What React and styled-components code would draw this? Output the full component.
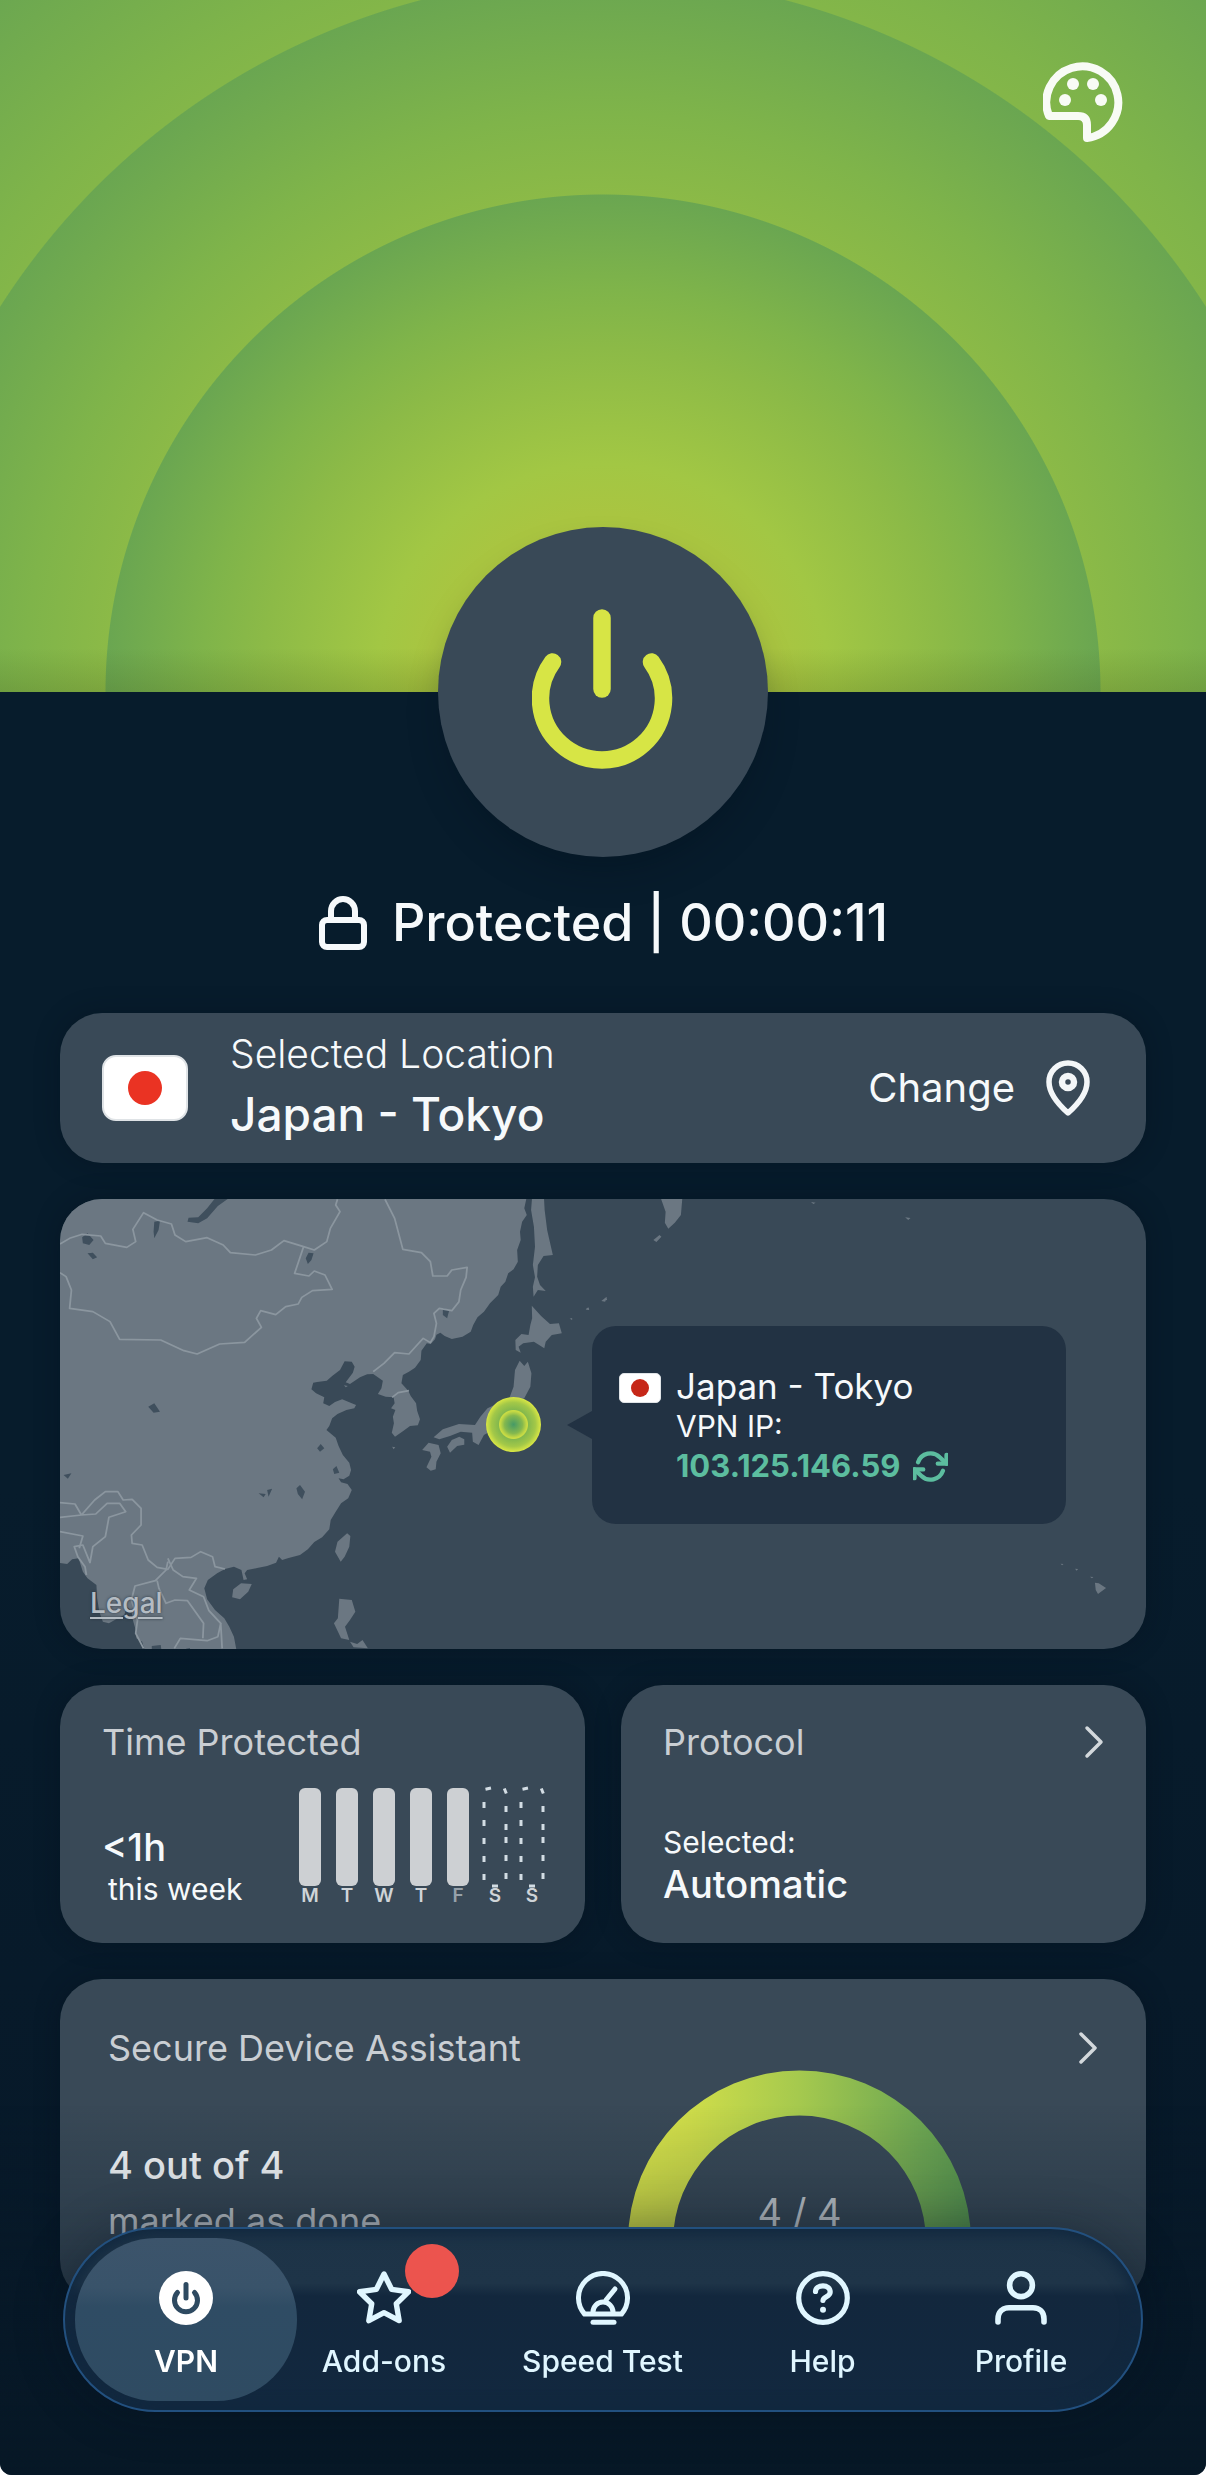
import React from "react";
import styled, { createGlobalStyle } from "styled-components";
import { FiRefreshCw } from "react-icons/fi";

const GlobalStyle = createGlobalStyle`
  *, *::before, *::after { box-sizing: border-box; }
  html { background: #ffffff; }
  body {
    margin: 0;
    font-family: Inter, "Open Sans", "Liberation Sans", sans-serif;
    color: #f6f9fb;
    -webkit-font-smoothing: antialiased;
  }
  button { font: inherit; color: inherit; background: none; border: 0; padding: 0; cursor: pointer; }
  h1, h2, p { margin: 0; font-weight: inherit; font-size: inherit; }
  svg { display: block; flex: none; }
`;

const Page = styled.div`
  min-height: 100vh;
  display: flex;
  flex-direction: column;
  background: linear-gradient(#071c2c 60%, #071828);
  border-radius: 0 0 12px 12px;
  overflow: hidden;
`;

const ringStops = (radius) => `
  #b1c43f 0px,
  #a9c541 ${radius * 0.36}px,
  #a2c744 ${radius * 0.46}px,
  #8cba47 ${radius * 0.69}px,
  #7fb44a ${radius * 0.81}px,
  #6aa651 ${radius}px
`;

const Hero = styled.header`
  height: 692px;
  display: flex;
  justify-content: flex-end;
  align-items: flex-start;
  padding: 62px 83px;
  background:
    linear-gradient(transparent calc(100% - 44px), rgba(60, 80, 20, 0.2)),
    radial-gradient(circle at 50% 100%, ${ringStops(497)}, transparent 498px),
    radial-gradient(circle at 50% 100%, ${ringStops(715)}, transparent 716px),
    radial-gradient(circle at 50% 100%, ${ringStops(933)});
`;

const IconButton = styled.button`
  display: flex;
`;

const PowerButton = styled.button`
  align-self: center;
  width: 330px;
  height: 330px;
  margin-top: -165px;
  display: flex;
  align-items: center;
  justify-content: center;
  border-radius: 50%;
  background: #394957;
  box-shadow: 0 20px 36px -8px rgba(4, 14, 26, 0.35);
`;

const Status = styled.h1`
  display: flex;
  align-items: center;
  justify-content: center;
  gap: 24px;
  margin-top: 34px;
  font-size: 52px;
  line-height: 64px;
  font-weight: 500;
`;

const Cards = styled.main`
  display: flex;
  flex-direction: column;
  gap: 36px;
  padding: 58px 60px 173px;
`;

const Card = styled.section`
  background: #394957;
  border-radius: 42px;
  box-shadow: 0 0 24px rgba(4, 14, 26, 0.35);
`;

const LocationCard = styled(Card)`
  height: 150px;
  display: flex;
  align-items: center;
  padding: 0 56px 0 42px;
  gap: 42px;
`;

const Flag = styled.span`
  flex: none;
  display: flex;
  align-items: center;
  justify-content: center;
  width: ${(p) => (p.$small ? 42 : 86)}px;
  height: ${(p) => (p.$small ? 30 : 66)}px;
  border-radius: ${(p) => (p.$small ? 5 : 14)}px;
  border: ${(p) => (p.$small ? 1 : 2)}px solid #dfe3e6;
  background: #ffffff;
  &::before {
    content: "";
    width: ${(p) => (p.$small ? 18 : 34)}px;
    height: ${(p) => (p.$small ? 18 : 34)}px;
    border-radius: 50%;
    background: ${(p) => (p.$small ? "#c62718" : "#ea3323")};
  }
`;

const LocationText = styled.div`
  flex: 1;
  padding-bottom: 8px;
`;

const LocationLabel = styled.p`
  font-size: 39px;
  line-height: 60px;
  font-weight: 300;
`;

const LocationName = styled.p`
  font-size: 46px;
  line-height: 60px;
  font-weight: 500;
`;

const ChangeButton = styled.button`
  display: flex;
  align-items: center;
  gap: 31px;
  font-size: 40px;
  line-height: 48px;
`;

const MapCard = styled(Card)`
  position: relative;
  height: 450px;
  overflow: hidden;
`;

const MapArt = styled.svg`
  width: 100%;
  height: 100%;
`;

const LegalLink = styled.a`
  position: absolute;
  left: 30px;
  bottom: 30px;
  font-size: 28px;
  line-height: 32px;
  font-weight: 500;
  color: #b4bcc3;
  text-decoration: underline;
  text-decoration-thickness: 2px;
  text-underline-offset: 4px;
  text-shadow: 0 0 3px rgba(30, 40, 50, 0.8);
`;

const Marker = styled.span`
  position: absolute;
  left: 426px;
  top: 198px;
  width: 55px;
  height: 55px;
  border-radius: 50%;
  background:
    radial-gradient(circle, #469a66 0, #84b84e 9px, #c3d844 13px, #c9dc45 14px, transparent 15px),
    radial-gradient(circle, #7fb64e 14px, #a3c848 22px, #d5e445 27px);
`;

const Popup = styled.div`
  position: absolute;
  left: 532px;
  right: 80px;
  top: 127px;
  display: flex;
  align-items: flex-start;
  gap: 15px;
  padding: 40px 27px 38px;
  border-radius: 24px;
  background: #223243;
  &::before {
    content: "";
    position: absolute;
    right: 100%;
    top: 85px;
    border: 14px solid transparent;
    border-left: 0;
    border-right: 25px solid #223243;
  }
`;

const PopupFlag = styled.div`
  display: flex;
  align-items: center;
  height: 44px;
`;

const PopupTitle = styled.p`
  font-size: 35px;
  line-height: 40px;
`;

const PopupLabel = styled.p`
  font-size: 30px;
  line-height: 40px;
`;

const PopupAddress = styled.p`
  display: flex;
  align-items: center;
  gap: 13px;
  font-size: 31px;
  line-height: 40px;
  font-weight: 700;
  color: #5cbd9f;
`;

const CardRow = styled.div`
  display: grid;
  grid-template-columns: 1fr 1fr;
  gap: 36px;
`;

const StatCard = styled(Card)`
  height: 258px;
  display: flex;
  flex-direction: column;
  justify-content: space-between;
  padding: 33px 42px ${(p) => p.$bottom || 33}px;
`;

const CardHeader = styled.div`
  display: flex;
  align-items: center;
  justify-content: space-between;
`;

const CardTitle = styled.h2`
  font-size: 36px;
  line-height: 48px;
  color: #c9ced3;
`;

const StatBody = styled.div`
  display: flex;
  align-items: flex-end;
  justify-content: space-between;
`;

const StatValue = styled.p`
  font-size: 38px;
  line-height: 42px;
  font-weight: 500;
`;

const StatNote = styled.p`
  font-size: 30px;
  line-height: 42px;
  padding-left: ${(p) => (p.$indent ? 6 : 0)}px;
`;

const WeekChart = styled.ul`
  display: flex;
  gap: 15px;
  margin: 0 0 4px;
  padding: 0;
  list-style: none;
`;

const Day = styled.li`
  width: 22px;
  display: flex;
  flex-direction: column;
  align-items: center;
  font-size: 19px;
  line-height: 20px;
  font-weight: 600;
  color: ${(p) => (p.$dim ? "#97a1aa" : "#cfd4d8")};
`;

const Bar = styled.span`
  width: 22px;
  height: 98px;
  border-radius: 6px;
  background: #cdd0d3;
`;

const AssistantCard = styled(Card)`
  height: 323px;
  padding: 45px 48px 0;
`;

const AssistantBody = styled.div`
  display: flex;
  justify-content: space-between;
  padding-right: 127px;
`;

const AssistantText = styled.div`
  padding-top: 72px;
`;

const AssistantNote = styled.p`
  margin-top: 11px;
  font-size: 36px;
  line-height: 48px;
  color: #c9ced3;
`;

const Gauge = styled.div`
  display: grid;
  justify-items: center;
  & > * { grid-area: 1 / 1; }
`;

const GaugeLabel = styled.span`
  padding-top: 118px;
  font-size: 38px;
  line-height: 44px;
  color: #c9ced3;
`;

const BottomFade = styled.div`
  position: fixed;
  left: 0;
  right: 0;
  bottom: 0;
  height: 370px;
  pointer-events: none;
  border-radius: 0 0 12px 12px;
  background: linear-gradient(rgba(7, 24, 38, 0), rgba(7, 24, 38, 0.24) 34%, rgba(7, 24, 38, 0.9));
`;

const NavBar = styled.nav`
  position: fixed;
  left: 63px;
  right: 63px;
  bottom: 63px;
  height: 185px;
  padding: 9px 10px;
  display: grid;
  grid-template-columns: 222fr 174fr 263fr 177fr 220fr;
  border: 2px solid #22507f;
  border-radius: 93px;
  background: linear-gradient(#1d3347 0%, #1e3448 30%, #12273d 37%, #12283f 100%);
  box-shadow: inset 0 0 14px 5px #11283f, 0 0 50px rgba(4, 14, 26, 0.3);
`;

const NavItem = styled.button`
  display: flex;
  flex-direction: column;
  align-items: center;
  gap: 18px;
  padding-top: 33px;
  border-radius: 81px;
  font-size: 30px;
  line-height: 36px;
  font-weight: ${(p) => (p.$active ? 600 : 500)};
  white-space: nowrap;
  color: ${(p) => (p.$active ? "#ffffff" : "#e0f6ff")};
  background: ${(p) => (p.$active ? "linear-gradient(#3c546b, #39536a 30%, #2f4c64 42%, #2f4b62)" : "none")};
`;

const NavIcon = styled.span`
  position: relative;
  display: block;
  height: 54px;
`;

const Badge = styled.span`
  position: absolute;
  left: 48px;
  top: -27px;
  width: 54px;
  height: 54px;
  border-radius: 50%;
  background: #ec544e;
`;

const PaletteIcon = () => (
  <svg width="80" height="80" viewBox="0 0 80 80" fill="none" stroke="#f8fbf5" strokeWidth="8" strokeLinejoin="round">
    <path d="M6 54H35Q44 54 44 63V76A36 36 0 1 0 6 54Z" />
    <g fill="#f8fbf5" stroke="none">
      <circle cx="30" cy="22" r="6" />
      <circle cx="50" cy="22" r="6" />
      <circle cx="22" cy="38" r="6" />
      <circle cx="58" cy="38" r="6" />
    </g>
  </svg>
);

const PowerIcon = () => (
  <svg width="142" height="166" viewBox="0 0 142 166" fill="none" stroke="#d7e545" strokeWidth="17.5" strokeLinecap="round">
    <path d="M70 9V80" />
    <path d="M20.500 53A61.500 61.500 0 1 0 119.500 53" />
  </svg>
);

const LockIcon = () => (
  <svg width="50" height="54" viewBox="0 0 50 54" fill="none" stroke="#f6f9fb" strokeWidth="6">
    <rect x="4" y="24" width="42" height="27" rx="5" />
    <path d="M13 24V15A12 12 0 0 1 37 15V24" />
  </svg>
);

const PinIcon = () => (
  <svg width="44" height="57" viewBox="0 0 44 57" fill="none" stroke="#f3f6f8" strokeWidth="5.5" strokeLinejoin="round">
    <path d="M22 53C13 45 3 34 3 22A19 19 0 0 1 41 22C41 34 31 45 22 53Z" />
    <circle cx="22" cy="22" r="6" strokeWidth="6.500" />
  </svg>
);

const ChevronIcon = () => (
  <svg width="20" height="34" viewBox="0 0 20 34" fill="none" stroke="#d3d8dc" strokeWidth="3.500" strokeLinecap="round" strokeLinejoin="round">
    <path d="M3 3L17 17L3 31" />
  </svg>
);

const VpnIcon = () => (
  <svg width="54" height="54" viewBox="0 0 54 54" fill="none" stroke="#2e4a61" strokeWidth="5" strokeLinecap="round">
    <circle cx="27" cy="27" r="27" fill="#ffffff" stroke="none" />
    <path d="M27 13.500V27" />
    <path d="M18.500 21.500A11.500 11.500 0 1 0 35.500 21.500" />
  </svg>
);

const StarIcon = () => (
  <svg width="54" height="54" viewBox="1 1 22 22" fill="none" stroke="currentColor" strokeWidth="2.200" strokeLinejoin="round">
    <path d="M12 2.200L15.090 8.460L22 9.470L17 14.340L18.180 21.220L12 17.970L5.820 21.220L7 14.340L2 9.470L8.910 8.460Z" />
  </svg>
);

const SpeedIcon = () => (
  <svg width="54" height="54" viewBox="0 0 54 54" fill="none" stroke="currentColor" strokeWidth="5" strokeLinecap="round" strokeLinejoin="round">
    <path d="M8.500 43A24.500 24.500 0 1 1 45.500 43Z" />
    <path d="M17 42V41A10 10 0 0 1 37 41V42" />
    <path d="M30 29L39 18" />
    <path d="M17 51.200H38" />
  </svg>
);

const HelpIcon = () => (
  <svg width="54" height="54" viewBox="0 0 54 54" fill="none" stroke="currentColor" strokeWidth="5.200" strokeLinecap="round">
    <circle cx="27" cy="27" r="24.300" />
    <path d="M19.500 20.500C19.500 17 23 14.800 27 14.800C31 14.800 34.200 17 34.200 21C34.200 26 27.500 25.500 27 29.500" />
    <circle cx="27" cy="38.800" r="3" fill="currentColor" stroke="none" />
  </svg>
);

const ProfileIcon = () => (
  <svg width="54" height="54" viewBox="0 0 54 54" fill="none" stroke="currentColor" strokeWidth="5.600" strokeLinecap="round">
    <circle cx="27" cy="14.200" r="11.400" />
    <path d="M4 51V48C4 41 8.500 36.800 15 36.800H39C45.500 36.800 50 41 50 48V51" />
  </svg>
);

const EmptyBar = () => (
  <svg width="22" height="98" viewBox="0 0 22 98" overflow="visible" stroke="#d3dde4" strokeWidth="3" fill="none">
    <path d="M0 14V20M0 32V38M0 50V56M0 68V74M0 86V92" />
    <path d="M22 18V24M22 36V42M22 49V55M22 67V73M22 85V91" />
    <path d="M1.500 1.200L7 0M20.300 0.500L22.300 5.500M8 98H14" />
  </svg>
);

const GaugeArc = () => (
  <svg width="343" height="174" viewBox="0 2 343 174" overflow="visible" fill="none">
    <defs>
      <linearGradient id="gauge" x1="0" y1="0" x2="1" y2="0">
        <stop offset="0" stopColor="#dde84a" />
        <stop offset="0.180" stopColor="#cfdd4a" />
        <stop offset="0.500" stopColor="#a5c94e" />
        <stop offset="0.850" stopColor="#6fa852" />
        <stop offset="1" stopColor="#5a9a50" />
      </linearGradient>
    </defs>
    <path d="M0 172A171.500 171.500 0 0 1 343 172H298A126.500 126.500 0 0 0 45 172Z" fill="url(#gauge)" />
  </svg>
);

const AsiaMap = () => (
  <MapArt viewBox="60 1199 1086 450" preserveAspectRatio="xMinYMid slice" aria-hidden="true">
    <g transform="matrix(0.357143 0 0 0.333333 50 1190)" fill="#6b7782">
      <path d="M20 20H1335L1328 55L1335 75L1322 95L1316 125L1318 150L1308 180L1310 215L1298 238L1283 250L1275 275L1262 290L1255 315L1232 340L1215 365L1197 382L1185 405L1178 425L1155 440L1125 447L1105 438L1093 428L1082 434L1078 448L1066 462L1055 460L1040 482L1038 510L1022 533L1005 545L988 555L984 580L1003 602L1010 618L1025 640L1028 662L1036 688L1030 706L1008 708L990 722L966 740L957 728L963 700L960 680L967 660L955 655L965 640L962 622L940 620L918 612L928 595L932 572L905 552L888 553L868 562L840 582L828 577L848 548L853 530L845 515L825 514L812 540L790 558L775 572L748 576L737 578L732 598L745 610L768 622L765 640L782 648L798 636L818 628L845 640L857 645L852 655L830 660L805 672L790 685L782 708L774 720L800 743L808 768L820 795L838 818L843 840L838 857L822 868L808 865L815 877L833 882L845 900L835 925L815 940L800 965L786 990L782 1018L762 1042L740 1056L722 1078L700 1095L668 1104L650 1110L641 1100L633 1118L608 1128L580 1134L552 1140L545 1150L552 1168L542 1170L536 1140L515 1130L490 1137L468 1150L442 1170L432 1195L440 1228L462 1260L488 1285L502 1310L515 1340L522 1380H265L258 1355L242 1345L240 1320L232 1290L228 1262L215 1250L208 1275L185 1288L165 1300L148 1295L138 1265L132 1225L130 1185L105 1165L92 1145L80 1105L62 1108L48 1122L20 1118Z" />
      <path d="M1350 20H1383L1385 60L1392 120L1408 195L1382 198L1366 225L1364 260L1372 285L1388 303L1366 300L1354 320L1352 290L1358 262L1352 225L1358 170L1355 110L1347 60Z" />
      <path d="M1349 347L1375 378L1400 402L1425 400L1433 430L1405 435L1388 455L1384 475L1355 455L1325 460L1312 470L1318 488L1304 480L1303 450L1320 432L1340 435L1345 405L1350 385Z" />
      <path d="M1315 512L1328 528L1338 515L1348 550L1345 590L1328 625L1290 640L1240 720L1215 735L1200 765L1184 755L1182 728L1150 725L1120 738L1090 748L1074 742L1100 718L1145 702L1190 705L1205 680L1225 655L1255 640L1285 628L1298 590L1302 540Z" />
      <path d="M1146 740L1160 748L1160 764L1140 768L1120 788L1112 770L1125 750ZM1060 758L1088 765L1094 790L1082 815L1080 838L1066 842L1054 832L1068 800L1064 785L1042 780Z" />
      <path d="M832 1030L841 1038L838 1070L825 1100L814 1115L798 1085L805 1055ZM535 1180L565 1182L555 1205L532 1228L510 1222L513 1198ZM810 1226L845 1230L855 1265L840 1290L826 1310L838 1350L815 1345L795 1300L806 1285ZM840 1355L860 1362L875 1350L890 1375L850 1372Z" />
      <path d="M1500 358L1508 353L1510 360ZM1548 332L1558 322L1560 330ZM1455 386L1462 384L1462 390ZM958 770L967 772L962 778ZM823 586L834 588L828 592Z" />
      <g fill="#3f4f5d">
        <path d="M462 25H500L470 48L440 85L415 100L385 95L388 83L415 82L440 55ZM90 142L105 130L122 150L110 165L92 160ZM105 190L120 188L132 202L120 208ZM292 95L308 92L304 120L292 145L290 125ZM724 188L738 190L732 210L722 222L716 205ZM1100 355L1118 360L1112 385L1100 375ZM275 650L292 640L308 665L290 668ZM748 775L758 762L768 775L756 785ZM792 838L802 828L810 848L796 852ZM38 855L60 850L50 866ZM584 910L604 912L598 922ZM608 900L622 896L612 920ZM690 895L700 885L714 905L706 928L694 912ZM285 1368L310 1365L312 1380H285ZM380 1376L392 1374V1380Z" />
      </g>
      <g fill="none" stroke="#8b969f" strokeWidth="5" strokeLinejoin="round">
        <path d="M28 162L55 145L90 133L142 138L155 160L215 172L240 155L232 118L262 68L300 90L340 102L350 135L380 155L440 143L485 165L505 188L575 195L620 180L655 152L710 170L740 180L775 155L785 115L812 65L800 45L805 28" />
        <path d="M710 170L685 250L725 258L740 243L770 255L790 298L735 302L705 322L695 342L660 350L632 374L590 362L578 385L592 412L545 457L475 462L412 492L375 482L310 450L195 448L168 395L120 365L55 355L60 300L45 260L28 248" />
        <path d="M938 28L965 85L988 178L1040 188L1065 215L1072 258H1112L1125 240L1168 232L1165 262L1150 300L1145 335L1125 362L1090 355L1075 370L1082 400L1075 440L1065 458L1045 445L1005 492L965 488L935 520L905 545M958 622L975 608L1005 602" />
        <path d="M28 938L70 942L88 975L125 930L155 905L190 905L205 930L230 928L255 955L255 1005L228 1035L230 1060L258 1065L275 1110L300 1132L330 1138L350 1105L395 1102L422 1085L455 1100L462 1130L490 1137M28 982L88 975L128 972L160 940L195 940L212 965L165 982L155 1040L120 1070L112 1118L92 1065L68 1070L78 1100L98 1130L102 1155M28 1025L92 1038L82 1075" />
        <path d="M330 1115L325 1140L295 1172L238 1188L228 1230L245 1290L240 1330L262 1375M330 1105L345 1140L372 1160L410 1165L390 1200L430 1220L445 1262L478 1300L470 1340L440 1352L365 1345L348 1375M300 1172L305 1195L325 1240L350 1230L385 1232L405 1262L430 1300L428 1345M478 1300L482 1375" />
      </g>
    </g>
    <g transform="matrix(0.382653 0 0 0.333333 560 1190)" fill="#6b7782">
      <path d="M262 20H320L316 75L300 98L283 116L274 98L276 65ZM260 135L265 140L252 156L244 150ZM108 333L122 320L118 335ZM67 358L74 352L76 360ZM902 82L916 84L910 90ZM656 36L668 38L662 42ZM1398 1178L1408 1180L1427 1194L1406 1212L1400 1200ZM1308 1121L1316 1122L1312 1126ZM1346 1136L1354 1137L1350 1142ZM1385 1160L1394 1161L1390 1165Z" />
    </g>
  </MapArt>
);

const week = [
  { id: "mon", letter: "M", filled: true },
  { id: "tue", letter: "T", filled: true },
  { id: "wed", letter: "W", filled: true },
  { id: "thu", letter: "T", filled: true },
  { id: "fri", letter: "F", filled: true, dim: true },
  { id: "sat", letter: "S" },
  { id: "sun", letter: "S" },
];

const tabs = [
  { label: "VPN", Icon: VpnIcon, active: true },
  { label: "Add-ons", Icon: StarIcon, badge: true },
  { label: "Speed Test", Icon: SpeedIcon },
  { label: "Help", Icon: HelpIcon },
  { label: "Profile", Icon: ProfileIcon },
];

export default function App() {
  return (
    <>
      <GlobalStyle />
      <Page>
        <Hero>
          <IconButton aria-label="Themes"><PaletteIcon /></IconButton>
        </Hero>
        <PowerButton aria-label="Disconnect"><PowerIcon /></PowerButton>
        <Status><LockIcon />Protected | 00:00:11</Status>
        <Cards>
          <LocationCard>
            <Flag />
            <LocationText>
              <LocationLabel>Selected Location</LocationLabel>
              <LocationName>Japan - Tokyo</LocationName>
            </LocationText>
            <ChangeButton>Change<PinIcon /></ChangeButton>
          </LocationCard>

          <MapCard>
            <AsiaMap />
            <Marker />
            <LegalLink href="#legal">Legal</LegalLink>
            <Popup>
              <PopupFlag><Flag $small /></PopupFlag>
              <div>
                <PopupTitle>Japan - Tokyo</PopupTitle>
                <PopupLabel>VPN IP:</PopupLabel>
                <PopupAddress>
                  103.125.146.59
                  <IconButton aria-label="Refresh IP"><FiRefreshCw size={35} strokeWidth={3} /></IconButton>
                </PopupAddress>
              </div>
            </Popup>
          </MapCard>

          <CardRow>
            <StatCard>
              <CardTitle>Time Protected</CardTitle>
              <StatBody>
                <div>
                  <StatValue>&lt;1h</StatValue>
                  <StatNote $indent>this week</StatNote>
                </div>
                <WeekChart>
                  {week.map((day) => (
                    <Day key={day.id} $dim={day.dim}>
                      {day.filled ? <Bar /> : <EmptyBar />}
                      {day.letter}
                    </Day>
                  ))}
                </WeekChart>
              </StatBody>
            </StatCard>
            <StatCard $bottom={38}>
              <CardHeader>
                <CardTitle>Protocol</CardTitle>
                <IconButton aria-label="Open protocol"><ChevronIcon /></IconButton>
              </CardHeader>
              <div>
                <StatNote>Selected:</StatNote>
                <StatValue>Automatic</StatValue>
              </div>
            </StatCard>
          </CardRow>

          <AssistantCard>
            <CardHeader>
              <CardTitle>Secure Device Assistant</CardTitle>
              <IconButton aria-label="Open assistant"><ChevronIcon /></IconButton>
            </CardHeader>
            <AssistantBody>
              <AssistantText>
                <StatValue>4 out of 4</StatValue>
                <AssistantNote>marked as done</AssistantNote>
              </AssistantText>
              <Gauge>
                <GaugeArc />
                <GaugeLabel>4 / 4</GaugeLabel>
              </Gauge>
            </AssistantBody>
          </AssistantCard>
        </Cards>
      </Page>
      <BottomFade />
      <NavBar>
        {tabs.map(({ label, Icon, active, badge }) => (
          <NavItem key={label} $active={active}>
            <NavIcon>
              <Icon />
              {badge && <Badge />}
            </NavIcon>
            {label}
          </NavItem>
        ))}
      </NavBar>
    </>
  );
}
